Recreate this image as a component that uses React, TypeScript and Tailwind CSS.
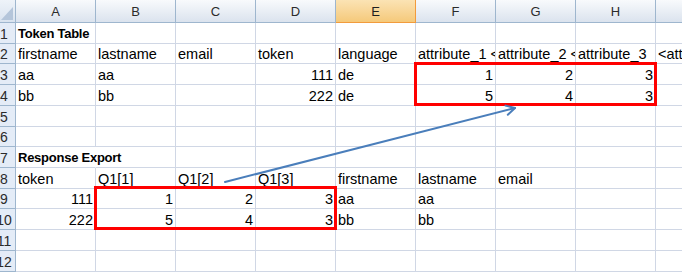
import React from 'react'

type Cell = { t: string; r?: boolean; b?: boolean; clip?: boolean; spill?: boolean }

const COLS = ['A', 'B', 'C', 'D', 'E', 'F', 'G', 'H', 'I']

// row heights incl. bottom gridline, tuned to the screenshot
const ROW_H = ['h-[21px]', 'h-[20px]', 'h-[21px]', 'h-[21px]', 'h-[21px]', 'h-[20px]', 'h-[21px]', 'h-[21px]', 'h-[20px]', 'h-[21px]', 'h-[21px]', 'h-[21px]']

const c = (t: string, o: Partial<Cell> = {}): Cell => ({ t, ...o })
const n = (t: string): Cell => ({ t, r: true })

const DATA: Cell[][] = [
  [c('Token Table', { b: true })],
  [
    c('firstname'), c('lastname'), c('email'), c('token'), c('language'),
    c('attribute_1 <', { clip: true }),
    c('attribute_2 <', { clip: true }),
    c('attribute_3', { clip: true }),
    c('<attribute_3>', { clip: true }),
  ],
  [c('aa'), c('aa'), c(''), n('111'), c('de'), n('1'), n('2'), n('3')],
  [c('bb'), c('bb'), c(''), n('222'), c('de'), n('5'), n('4'), n('3')],
  [],
  [],
  [c('Response Export', { b: true, spill: true })],
  [c('token'), c('Q1[1]'), c('Q1[2]'), c('Q1[3]'), c('firstname'), c('lastname'), c('email')],
  [n('111'), n('1'), n('2'), n('3'), c('aa'), c('aa')],
  [n('222'), n('5'), n('4'), n('3'), c('bb'), c('bb')],
  [],
  [],
]

function ColHeader({ label }: { label: string }) {
  const selected = label === 'E'
  return (
    <div
      className={`flex items-end justify-center pb-[2px] text-[13px] leading-4 border-b border-r ${
        selected
          ? 'bg-gradient-to-b from-[#fbe3b4] to-[#f5c97a] border-[#f29b3c] text-[#1f1f1f]'
          : 'bg-gradient-to-b from-[#f8fafc] to-[#dbe3ee] border-[#9eb6ce] text-[#2b2b2b]'
      }`}
    >
      {label}
    </div>
  )
}

function RowHeader({ num }: { num: number }) {
  return (
    <div className="bg-[#e4ecf7] border-r border-b border-[#9eb6ce] overflow-hidden flex items-end pb-[1px] text-[14px] leading-4 text-[#2b2b2b]">
      <div className="w-[8px] flex justify-center whitespace-nowrap">{num}</div>
    </div>
  )
}

function DataCell({ cell }: { cell?: Cell }) {
  const cls = [
    'flex items-end pb-[1px] px-[2px] border-r border-b border-[#d0d7e5] whitespace-nowrap leading-4',
    cell?.r ? 'justify-end' : 'justify-start',
    cell?.b ? 'font-bold text-[13px] tracking-[-0.25px]' : 'text-[14.5px]',
    cell?.clip ? 'overflow-hidden' : 'overflow-visible',
    cell?.spill ? 'border-r-transparent' : '',
  ].join(' ')
  return <div className={cls}>{cell?.t}</div>
}

export default function App() {
  return (
    <div className="relative w-[682px] h-[272px] overflow-hidden bg-white text-black font-['Liberation_Sans',Arial,sans-serif]">
      <div className="w-max">
        {/* column header row */}
        <div className="grid grid-cols-[16px_repeat(9,80px)] h-[23px]">
          <div className="relative bg-gradient-to-b from-[#eef3f9] to-[#d9e3ef] border-r border-b border-[#9eb6ce]">
            <svg className="absolute right-[2px] bottom-[2px]" width="12" height="13" viewBox="0 0 12 13">
              <polygon points="12,0 12,13 0,13" fill="#b4c5da" />
            </svg>
          </div>
          {COLS.map(col => (
            <ColHeader key={col} label={col} />
          ))}
        </div>

        {DATA.map((row, i) => (
          <div key={i} className={`grid grid-cols-[16px_repeat(9,80px)] ${ROW_H[i]}`}>
            <RowHeader num={i + 1} />
            {COLS.map((col, j) => (
              <DataCell key={col} cell={row[j]} />
            ))}
          </div>
        ))}
      </div>

      {/* red range outlines */}
      <div className="absolute left-[414px] top-[62px] w-[243px] h-[44px] border-[3px] border-[#ff0000]" />
      <div className="absolute left-[94px] top-[186px] w-[243px] h-[44px] border-[3px] border-[#ff0000]" />

      {/* connector arrow */}
      <svg className="absolute inset-0 pointer-events-none" width="682" height="272" viewBox="0 0 682 272">
        <g stroke="#4a7ebb" strokeWidth="2" fill="none" strokeLinecap="round" strokeLinejoin="round">
          <line x1="225" y1="182" x2="515" y2="108" />
          <polyline points="505.5,105.6 515,108 507.8,114.8" />
        </g>
      </svg>
    </div>
  )
}
